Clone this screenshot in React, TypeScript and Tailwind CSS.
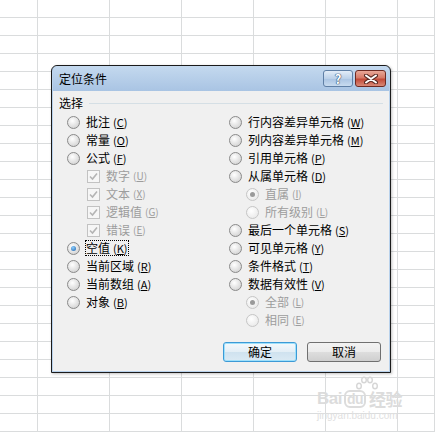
import React from "react";

const FONT = "font-['SimSun','Noto_Sans_CJK_SC',sans-serif]";

type Opt = {
  label: string;
  key: string;
  kind: "radio" | "check";
  sub?: boolean;
  checked?: boolean;
  disabled?: boolean;
  focus?: boolean;
};

const left: Opt[] = [
  { label: "批注", key: "C", kind: "radio" },
  { label: "常量", key: "O", kind: "radio" },
  { label: "公式", key: "F", kind: "radio" },
  { label: "数字", key: "U", kind: "check", sub: true, checked: true, disabled: true },
  { label: "文本", key: "X", kind: "check", sub: true, checked: true, disabled: true },
  { label: "逻辑值", key: "G", kind: "check", sub: true, checked: true, disabled: true },
  { label: "错误", key: "E", kind: "check", sub: true, checked: true, disabled: true },
  { label: "空值", key: "K", kind: "radio", checked: true, focus: true },
  { label: "当前区域", key: "R", kind: "radio" },
  { label: "当前数组", key: "A", kind: "radio" },
  { label: "对象", key: "B", kind: "radio" },
];

const right: Opt[] = [
  { label: "行内容差异单元格", key: "W", kind: "radio" },
  { label: "列内容差异单元格", key: "M", kind: "radio" },
  { label: "引用单元格", key: "P", kind: "radio" },
  { label: "从属单元格", key: "D", kind: "radio" },
  { label: "直属", key: "I", kind: "radio", sub: true, checked: true, disabled: true },
  { label: "所有级别", key: "L", kind: "radio", sub: true, disabled: true },
  { label: "最后一个单元格", key: "S", kind: "radio" },
  { label: "可见单元格", key: "Y", kind: "radio" },
  { label: "条件格式", key: "T", kind: "radio" },
  { label: "数据有效性", key: "V", kind: "radio" },
  { label: "全部", key: "L", kind: "radio", sub: true, checked: true, disabled: true },
  { label: "相同", key: "E", kind: "radio", sub: true, disabled: true },
];

function Radio({ checked, disabled }: { checked?: boolean; disabled?: boolean }) {
  return (
    <span
      className={
        "flex h-[13px] w-[13px] shrink-0 items-center justify-center rounded-full border " +
        (disabled
          ? "border-[#c6c6c6] bg-[radial-gradient(circle_at_40%_35%,#ffffff,#e4e4e4)]"
          : "border-[#8a8a8a] bg-[radial-gradient(circle_at_40%_35%,#ffffff,#c9c9c9)]")
      }
    >
      {checked && (
        <span
          className={
            "h-[5px] w-[5px] rounded-full " +
            (disabled
              ? "bg-[#9a9a9a]"
              : "bg-[radial-gradient(circle_at_40%_35%,#8fd0ff,#1a5ea8)]")
          }
        />
      )}
    </span>
  );
}

function Check() {
  return (
    <span className="flex h-[13px] w-[13px] shrink-0 items-center justify-center border border-[#c2c2c2] bg-[#f6f6f6]">
      <svg width="9" height="9" viewBox="0 0 9 9">
        <path d="M1 4.5 L3.5 7 L8 1.5" fill="none" stroke="#b4b4b4" strokeWidth="1.6" />
      </svg>
    </span>
  );
}

function Row({ o, indent }: { o: Opt; indent: string }) {
  return (
    <div className={"flex h-[18px] items-center " + (o.sub ? indent : "")}>
      {o.kind === "radio" ? <Radio checked={o.checked} disabled={o.disabled} /> : <Check />}
      <span
        className={
          "ml-[5px] flex items-center whitespace-nowrap text-[12px] leading-[14px] " +
          (o.disabled ? "text-[#9d9d9d] " : "text-black ") +
          (o.focus ? "border border-dotted border-black" : "border border-transparent")
        }
      >
        {o.label}
        <span className={"ml-[3px] " + (o.sub ? "text-[10px]" : "text-[11px]")}>
          (<span className="underline">{o.key}</span>)
        </span>
      </span>
    </div>
  );
}

function Sheet() {
  const rows = Array.from({ length: 24 });
  const cols = [
    "w-[38px]",
    "w-[72px]",
    "w-[72px]",
    "w-[72px]",
    "w-[72px]",
    "w-[72px]",
    "w-[37px]",
  ];
  return (
    <div className="flex flex-col">
      {rows.map((_, r) => (
        <div key={r} className="flex">
          {cols.map((c, i) => (
            <div key={i} className={c + " h-[18px] shrink-0 border-b border-r border-[#dadcdd]"} />
          ))}
        </div>
      ))}
    </div>
  );
}

export default function App() {
  return (
    <div className={"relative h-[432px] w-[435px] overflow-hidden bg-white " + FONT}>
      <Sheet />

      {/* watermark */}
      <div className="absolute left-[317px] top-[376px] flex flex-col items-start text-[#dcdcdc]">
        <svg className="absolute left-[37px] top-0" width="26" height="16" viewBox="0 0 26 16">
          <g fill="none" stroke="#d6d6d6" strokeWidth="1.4">
            <ellipse cx="5" cy="10" rx="2.3" ry="2.8" />
            <ellipse cx="10" cy="4" rx="2.3" ry="2.8" />
            <ellipse cx="16" cy="4" rx="2.3" ry="2.8" />
            <ellipse cx="21" cy="10" rx="2.3" ry="2.8" />
          </g>
        </svg>
        <div className="mt-[14px] flex items-end font-['Liberation_Sans',sans-serif] text-[17px] font-bold leading-[18px] tracking-[-0.5px]">
          <span>Bai</span>
          <span className="ml-[2px] rounded-[6px] border-2 border-[#dcdcdc] px-[1px] text-[14px] leading-[14px]">du</span>
          <span className={"ml-[3px] text-[17px] " + FONT}>经验</span>
        </div>
        <div className="mt-[2px] font-['Liberation_Sans',sans-serif] text-[10px] leading-[11px] text-[#e0e0e0]">
          jingyan.baidu.com
        </div>
      </div>

      {/* dialog */}
      <div className="absolute left-[51px] top-[65px] flex h-[308px] w-[340px] flex-col rounded-t-[6px] border border-[#1b1b1b] bg-[#b9d2ec] px-px pb-px shadow-[1px_1px_3px_rgba(0,0,0,0.25)]">
        <div className="flex h-[25px] items-center rounded-t-[5px] bg-[linear-gradient(#c4d9ef,#a9c4e3)] pl-[6px] pr-[3px]">
          <span className="flex-1 text-[12px] leading-[14px] text-black">定位条件</span>
          <button className="flex h-[17px] w-[30px] items-center justify-center rounded-[3px] border border-[#5f7fa5] bg-[linear-gradient(#e3edf8,#bcd1e9_50%,#a9c3e2_51%,#c8dbef)] text-[13px] font-bold leading-none text-white [text-shadow:0_0_1px_#29476b,0_0_1px_#29476b,0_0_1px_#29476b]">
            ?
          </button>
          <button className="ml-[2px] flex h-[17px] w-[31px] items-center justify-center rounded-[3px] border border-[#6e2a22] bg-[linear-gradient(#e9a898,#d67a68_45%,#c24a38_55%,#d98a78)]">
            <svg width="14" height="10" viewBox="0 0 14 10">
              <path d="M2 1.5 L12 8.5 M12 1.5 L2 8.5" stroke="#5a2a22" strokeWidth="4" strokeLinecap="round" />
              <path d="M2 1.5 L12 8.5 M12 1.5 L2 8.5" stroke="#ffffff" strokeWidth="2" strokeLinecap="round" />
            </svg>
          </button>
        </div>

        <div className="flex flex-1 flex-col bg-[#f0f0f0]">
          <div className="mt-[5px] flex h-[14px] items-center pl-[6px] pr-[6px]">
            <span className="text-[12px] leading-[14px] text-black">选择</span>
            <span className="ml-[6px] h-px flex-1 bg-[#d5dfe5]" />
          </div>

          <div className="mt-[3px] flex">
            <div className="ml-[14px] flex w-[162px] flex-col">
              {left.map((o, i) => (
                <Row key={i} o={o} indent="ml-[20px]" />
              ))}
            </div>
            <div className="flex flex-col">
              {right.map((o, i) => (
                <Row key={i} o={o} indent="ml-[17px]" />
              ))}
            </div>
          </div>

          <div className="mt-[13px] flex justify-end gap-[10px] pr-[8px]">
            <button className="flex h-[20px] w-[74px] items-center justify-center rounded-[3px] border border-[#3c9ad6] bg-[linear-gradient(#f4f9fc,#e3eef6_50%,#cfe2ef_51%,#dbeaf4)] text-[12px] leading-none text-black shadow-[inset_0_0_0_1px_#9ee0fb]">
              确定
            </button>
            <button className="flex h-[20px] w-[74px] items-center justify-center rounded-[3px] border border-[#707070] bg-[linear-gradient(#f2f2f2,#ebebeb_50%,#dddddd_51%,#cfcfcf)] text-[12px] leading-none text-black">
              取消
            </button>
          </div>
        </div>
      </div>
    </div>
  );
}
